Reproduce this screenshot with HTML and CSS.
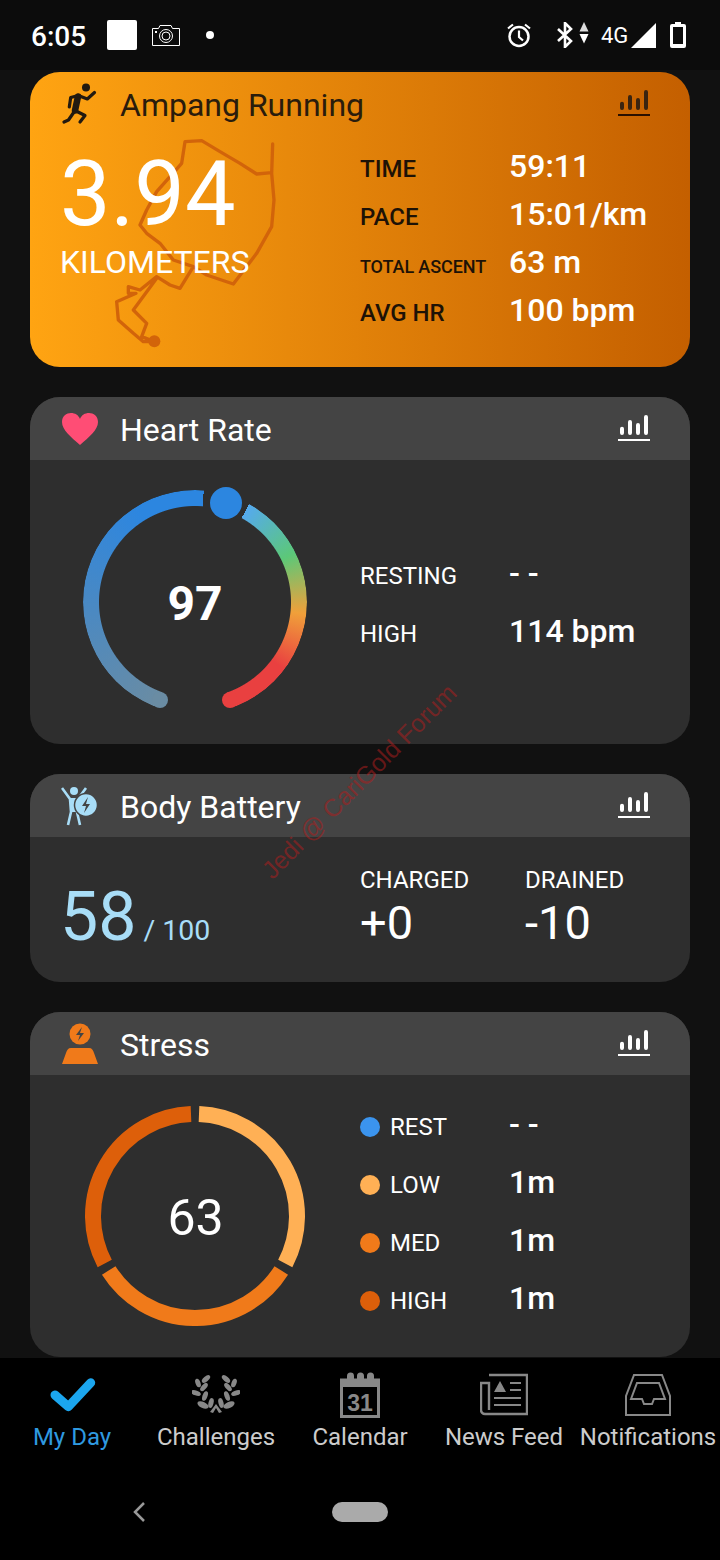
FILE: index.html
```html
<!DOCTYPE html>
<html lang="en">
<head>
<meta charset="utf-8">
<title>My Day</title>
<link rel="stylesheet" href="styles.css">
</head>
<body>
<div class="app">
  <header class="status">
    <span class="time">6:05</span>
    <span class="white-square"></span>
    <svg class="cam" width="28" height="21" viewBox="0 0 28 21"><path d="M.5 3.500h6l1.500-3h11l1.500 3h7v17H.5z" fill="none" stroke="#fff"/><circle cx="14" cy="11" r="6.500" fill="none" stroke="#fff"/><circle cx="14" cy="11" r="4" fill="none" stroke="#fff"/><rect x="3" y="6" width="2" height="2" fill="#fff"/></svg>
    <span class="dot"></span>
    <span class="status-right">
      <svg class="alarm" width="26" height="26" viewBox="0 0 26 26"><circle cx="13" cy="14.500" r="9.500" fill="none" stroke="#fff" stroke-width="2.500"/><path d="M13 8.500v6.500l4 3.500M2 6.500l5-4M24 6.500l-5-4" fill="none" stroke="#fff" stroke-width="2.200"/></svg>
      <svg class="bt" width="18" height="26" viewBox="0 0 18 26"><path d="M2 7l13 12-6 6V1l6 6L2 19" fill="none" stroke="#fff" stroke-width="2.600"/></svg>
      <svg class="updown" width="10" height="22" viewBox="0 0 10 22"><path d="M5 0l4.500 9.500h-9z" fill="#ddd"/><path d="M5 21.500L.5 12h9z" fill="#fff"/></svg>
      <span class="net">4G</span>
      <svg class="signal" width="25" height="25" viewBox="0 0 25 25"><path d="M25 0v25H0z" fill="#fff"/></svg>
      <svg class="battery" width="16" height="26" viewBox="0 0 16 26"><path d="M5 0h6v2h3a2 2 0 0 1 2 2v20a2 2 0 0 1-2 2H2a2 2 0 0 1-2-2V4a2 2 0 0 1 2-2h3z" fill="#fff"/><rect x="3" y="5" width="10" height="17" fill="#0c0c0c"/></svg>
    </span>
  </header>

  <main class="feed">
    <section class="card activity">
      <svg class="route" width="200" height="220" viewBox="300 402 600 660">
        <path d="M818 432L815 520L822 600L815 680L770 760L700 852L620 825L580 800L540 865L510 855L470 830L420 870L385 860L385 880L408 880L350 905L355 960L400 1000L430 1025L463 1025M815 518L770 522L720 490L660 455L605 422L555 425L545 490L510 530L470 575L440 630L420 675L440 700L480 730L520 780L580 800M470 835L400 930L440 970L425 1010L463 1025" fill="none" stroke="#d2640a" stroke-width="10" stroke-linejoin="round" stroke-linecap="round"/>
        <circle cx="463" cy="1024" r="18" fill="#d2640a"/>
      </svg>
      <div class="card-head">
        <svg class="head-icon" width="38" height="42" viewBox="0 0 38 42">
          <circle cx="25" cy="4.500" r="4" fill="#221a10"/>
          <path d="M17 13.500L14 27.500" fill="none" stroke="#221a10" stroke-width="6.500" stroke-linecap="round"/>
          <path d="M8.300 24L9.700 14.500 17.300 12.500 26.300 16 33.500 9.500M14 27.500L24 32.500 19 39M13 29L7.500 37 3 39" fill="none" stroke="#221a10" stroke-width="3.200" stroke-linejoin="round" stroke-linecap="round"/>
        </svg>
        <h2 class="card-title dark">Ampang Running</h2>
        <svg class="chart-icon chart-dark" width="32" height="28" viewBox="0 0 32 28"><path class="bars" d="M4 20v-4.300M12 20V9M20 20v-8M28 20V4"/><path class="base" d="M0 27h32"/></svg>
      </div>
      <div class="activity-body">
        <div class="distance">
          <div class="distance-num">3.94</div>
          <div class="distance-unit">KILOMETERS</div>
        </div>
        <dl class="stats">
          <div class="stat-row"><dt class="stat-label strong">TIME</dt><dd class="stat-value">59:11</dd></div>
          <div class="stat-row"><dt class="stat-label strong">PACE</dt><dd class="stat-value">15:01/km</dd></div>
          <div class="stat-row"><dt class="stat-label strong small">TOTAL ASCENT</dt><dd class="stat-value">63 m</dd></div>
          <div class="stat-row"><dt class="stat-label strong">AVG HR</dt><dd class="stat-value">100 bpm</dd></div>
        </dl>
      </div>
    </section>

    <section class="card heart">
      <div class="card-head">
        <svg class="head-icon" width="38" height="34" viewBox="0 0 38 34"><path d="M19 33C10 25 1 18 1 10 1 4 5.500 1 10 1c4 0 7.500 2 9 6 1.500-4 5-6 9-6 4.500 0 9 3 9 9 0 8-9 15-18 23z" fill="#ff4d75"/></svg>
        <h2 class="card-title">Heart Rate</h2>
        <svg class="chart-icon" width="32" height="28" viewBox="0 0 32 28"><path class="bars" d="M4 20v-4.300M12 20V9M20 20v-8M28 20V4"/><path class="base" d="M0 27h32"/></svg>
      </div>
      <div class="card-body heart-body">
        <div class="gauge">
          <div class="gauge-ring"></div>
          <span class="cap cap-left"></span>
          <span class="cap cap-right"></span>
          <span class="marker"></span>
          <span class="gauge-num">97</span>
        </div>
        <dl class="stats wide">
          <div class="stat-row"><dt class="stat-label">RESTING</dt><dd class="stat-value">- -</dd></div>
          <div class="stat-row"><dt class="stat-label">HIGH</dt><dd class="stat-value">114 bpm</dd></div>
        </dl>
      </div>
    </section>

    <section class="card battery-card">
      <div class="card-head">
        <svg class="head-icon" width="38" height="42" viewBox="0 0 38 42">
          <circle cx="13" cy="6" r="4" fill="#a8ddf7"/>
          <path d="M1 3l8 11 1 13-3 13M25 3l-8 11M16 27l3 13" fill="none" stroke="#a8ddf7" stroke-width="2.600"/>
          <path d="M9 13h8v14H9z" fill="#a8ddf7"/>
          <circle cx="25" cy="20" r="11.500" fill="#a8ddf7" stroke="#444" stroke-width="1.500"/>
          <path d="M27 12l-6 9h4l-2 7 6-9h-4z" fill="#444"/>
        </svg>
        <h2 class="card-title">Body Battery</h2>
        <svg class="chart-icon" width="32" height="28" viewBox="0 0 32 28"><path class="bars" d="M4 20v-4.300M12 20V9M20 20v-8M28 20V4"/><path class="base" d="M0 27h32"/></svg>
      </div>
      <div class="card-body battery-body">
        <div class="level"><span class="level-num">58</span><span class="level-max">/ 100</span></div>
        <div class="delta charged"><div class="stat-label">CHARGED</div><div class="delta-num">+0</div></div>
        <div class="delta"><div class="stat-label">DRAINED</div><div class="delta-num">-10</div></div>
      </div>
    </section>

    <section class="card stress">
      <div class="card-head">
        <svg class="head-icon" width="38" height="42" viewBox="0 0 38 42">
          <circle cx="19" cy="11" r="10.500" fill="#f07a1a"/>
          <path d="M21 4l-6 8h4l-2 6 6-8h-4z" fill="#444"/>
          <path d="M10 25h18c3 0 4 2 5 5l4 11H1l4-11c1-3 2-5 5-5z" fill="#f07a1a"/>
        </svg>
        <h2 class="card-title">Stress</h2>
        <svg class="chart-icon" width="32" height="28" viewBox="0 0 32 28"><path class="bars" d="M4 20v-4.300M12 20V9M20 20v-8M28 20V4"/><path class="base" d="M0 27h32"/></svg>
      </div>
      <div class="card-body stress-body">
        <div class="donut">
          <svg width="220" height="220" viewBox="0 0 220 220">
            <path d="M114 8.080A102 102 0 0 1 200.270 157.490" fill="none" stroke="#ffb055" stroke-width="16"/>
            <path d="M196.270 164.430A102 102 0 0 1 23.730 164.430" fill="none" stroke="#f07a1a" stroke-width="16"/>
            <path d="M19.730 157.490A102 102 0 0 1 106 8.080" fill="none" stroke="#dd5f0a" stroke-width="16"/>
          </svg>
          <span class="donut-num">63</span>
        </div>
        <dl class="legend">
          <div class="legend-row"><dt class="legend-label"><i class="swatch rest"></i>REST</dt><dd class="stat-value">- -</dd></div>
          <div class="legend-row"><dt class="legend-label"><i class="swatch low"></i>LOW</dt><dd class="stat-value">1m</dd></div>
          <div class="legend-row"><dt class="legend-label"><i class="swatch med"></i>MED</dt><dd class="stat-value">1m</dd></div>
          <div class="legend-row"><dt class="legend-label"><i class="swatch high"></i>HIGH</dt><dd class="stat-value">1m</dd></div>
        </dl>
      </div>
    </section>
  </main>

  <nav class="bottom">
    <div class="tabs">
      <div class="tab active">
        <svg class="tab-icon" width="48" height="46" viewBox="0 0 48 46"><path d="M7 23l13.300 11.700L42.700 10.700" fill="none" stroke="#1ba6ef" stroke-width="9" stroke-linecap="round" stroke-linejoin="round"/></svg>
        <span class="tab-label">My Day</span>
      </div>
      <div class="tab">
        <svg class="tab-icon" width="48" height="46" viewBox="0 0 48 46">
          <defs><g id="laurel" fill="#888">
            <ellipse cx="14" cy="7" rx="5" ry="2.500" transform="rotate(-40 14 7)"/>
            <ellipse cx="6" cy="11" rx="2.500" ry="4.500" transform="rotate(-20 6 11)"/>
            <ellipse cx="12" cy="15" rx="5" ry="2.500" transform="rotate(-50 12 15)"/>
            <ellipse cx="4" cy="21" rx="5" ry="2.500" transform="rotate(20 4 21)"/>
            <ellipse cx="13" cy="24" rx="5" ry="2.500" transform="rotate(-70 13 24)"/>
            <ellipse cx="11" cy="33" rx="6" ry="3" transform="rotate(25 11 33)"/>
            <ellipse cx="19" cy="31" rx="5" ry="2.500" transform="rotate(-75 19 31)"/>
            <path d="M24 36l-3 5-3-1 6-8z"/>
          </g></defs>
          <use href="#laurel"/>
          <use href="#laurel" transform="matrix(-1 0 0 1 48 0)"/>
        </svg>
        <span class="tab-label">Challenges</span>
      </div>
      <div class="tab">
        <svg class="tab-icon" width="42" height="46" viewBox="0 0 42 46">
          <path d="M2.500 8h37v36.500h-37z" fill="none" stroke="#888" stroke-width="3"/>
          <path d="M2 7h38v8H2z" fill="#888"/>
          <path d="M9 10V4a2.500 2.500 0 0 1 5 0v6M19 10V4a2.500 2.500 0 0 1 5 0v6M29 10V4a2.500 2.500 0 0 1 5 0v6" fill="#888" stroke="#888" stroke-width="2"/>
          <text x="21" y="39" class="cal-day">31</text>
        </svg>
        <span class="tab-label">Calendar</span>
      </div>
      <div class="tab">
        <svg class="tab-icon" width="48" height="46" viewBox="0 0 48 46">
          <path d="M9 3h38v39H5a4 4 0 0 1-4-4V11h8v27" fill="none" stroke="#888" stroke-width="2.400"/>
          <path d="M20 9l6 11H14z" fill="#888"/>
          <path d="M30 11h11M30 18h11M14 26h27M14 33h27" stroke="#888" stroke-width="2.200"/>
        </svg>
        <span class="tab-label">News Feed</span>
      </div>
      <div class="tab">
        <svg class="tab-icon" width="46" height="46" viewBox="0 0 46 46">
          <path d="M1 43V24L9 3h28l8 21v19z" fill="none" stroke="#888" stroke-width="2"/>
          <path d="M6 27l6-16h22l6 16H29l-2 5H19l-2-5z" fill="none" stroke="#888" stroke-width="2"/>
        </svg>
        <span class="tab-label">Notifications</span>
      </div>
    </div>
    <div class="gesture">
      <svg class="back" width="14" height="22" viewBox="0 0 14 22"><path d="M12 2L3 11l9 9" fill="none" stroke="#999" stroke-width="2.500"/></svg>
      <span class="pill"></span>
    </div>
  </nav>

  <div class="watermark">Jedi @ CariGold Forum</div>
</div>
</body>
</html>
```

FILE: styles.css
```css
* { box-sizing: border-box; }
html, body { margin: 0; padding: 0; }
body { background: #111; font-family: Roboto, "Noto Sans", sans-serif; color: #fff; }
h2, dl, dd, dt { margin: 0; padding: 0; font-weight: 400; }

.app { position: relative; width: 720px; height: 1560px; display: flex; flex-direction: column; overflow: hidden; background: #111; }

/* status bar */
.status { height: 70px; flex: none; background: #0c0c0c; display: flex; align-items: center; padding: 0 34px 0 31px; }
.time { font-size: 28px; font-weight: 500; width: 76px; padding-top: 3px; }
.white-square { width: 30px; height: 30px; background: #fff; border-radius: 2px; }
.cam { margin-left: 15px; }
.dot { width: 8px; height: 8px; border-radius: 50%; background: #fff; margin-left: 26px; }
.status-right { margin-left: auto; display: flex; align-items: center; }
.bt { margin-left: 24px; }
.updown { margin-left: 5px; margin-top: -4px; }
.net { font-size: 22px; margin-left: 12px; width: 29px; }
.signal { margin-left: 1px; }
.battery { margin-left: 14px; }

/* feed */
.feed { flex: 1; min-height: 0; overflow: hidden; padding: 2px 30px 0; display: flex; flex-direction: column; gap: 30px; }
.card { position: relative; flex: none; border-radius: 30px; overflow: hidden; background: #2e2e2e; }
.card-head { height: 63px; background: #444; display: flex; align-items: center; padding: 0 40px 0 31px; position: relative; }
.head-icon { flex: none; display: block; }
.card-title { flex: 1; font-size: 32px; margin-left: 21px; padding-top: 2px; white-space: nowrap; }
.card-title.dark { color: #2a1c0c; }
.chart-icon { flex: none; margin-top: -3px; }
.bars { fill: none; stroke: #fff; stroke-width: 4; stroke-linecap: round; }
.base { fill: none; stroke: #fff; stroke-width: 2; }
.chart-dark .bars { stroke: #3a2410; }
.chart-dark .base { stroke: #2a1000; }

/* activity */
.activity { height: 295px; background: linear-gradient(90deg, #ffa412, #c45f00); }
.activity .card-head { background: none; }
.route { position: absolute; left: 70px; top: 62px; }
.activity-body { position: relative; display: flex; }
.distance { width: 331px; padding-left: 30px; }
.distance-num { font-size: 90px; line-height: 92px; margin-top: 14px; }
.distance-unit { font-size: 32px; line-height: 36px; margin-top: 3px; }
.stats { display: flex; flex-direction: column; margin-left: -1px; }
.stat-row { display: flex; align-items: baseline; height: 48px; }
.stat-label { font-size: 24px; line-height: 30px; }
.stat-row .stat-label { width: 149px; white-space: nowrap; }
.stat-label.strong { font-weight: 500; color: #1d1206; }
.stat-label.small { font-size: 18px; letter-spacing: -.1px; }
.stat-value { font-size: 32px; line-height: 38px; font-weight: 500; white-space: nowrap; }
.activity .stats { padding-top: 12px; }

/* heart */
.card-body { display: flex; }
.heart-body { height: 284px; padding: 30px 0 0 53px; }
.gauge { position: relative; width: 224px; height: 224px; flex: none; display: flex; align-items: center; justify-content: center; }
.gauge-ring { position: absolute; inset: 0; border-radius: 50%;
  background: conic-gradient(#2c86e0 0deg 4.500deg, transparent 4.500deg 29deg, #55aaee 29deg, #5cc878 64deg, #f0a03a 96deg, #e94040 127deg, #e94040 160.400deg, transparent 160.400deg 200deg, #6a8ca3 200deg, #2c86e0 330deg);
  -webkit-mask: radial-gradient(closest-side, transparent 95.500px, #000 96.500px);
  mask: radial-gradient(closest-side, transparent 95.500px, #000 96.500px); }
.cap { position: absolute; width: 16px; height: 16px; border-radius: 50%; top: 202px; }
.cap-left { left: 69px; background: #6a8ca3; }
.cap-right { left: 139px; background: #e94040; }
.marker { position: absolute; width: 32px; height: 32px; border-radius: 50%; background: #2c86e0; left: 127px; top: -3px; }
.gauge-num { position: relative; font-size: 48px; font-weight: 700; padding-top: 3px; }
.stats.wide { margin-left: 53px; padding-top: 64px; gap: 10px; }

/* body battery */
.battery-body { height: 145px; position: relative; }
.level { width: 331px; padding: 42px 0 0 30px; display: flex; align-items: baseline; }
.level-num { font-size: 68px; line-height: 76px; color: #a8ddf7; }
.level-max { font-size: 28.500px; color: #a8ddf7; margin-left: 7px; }
.delta { padding-top: 28px; margin-left: -1px; }
.delta.charged { width: 165px; margin-right: 1px; }
.delta-num { font-size: 47px; line-height: 54px; margin-top: 1px; }

/* stress */
.stress-body { height: 282px; }
.donut { position: relative; width: 330px; flex: none; padding: 31px 0 0 55px; }
.donut svg { display: block; }
.donut-num { position: absolute; left: 55px; top: 33px; width: 220px; height: 220px; display: flex; align-items: center; justify-content: center; font-size: 50px; padding-left: 1px; }
.legend { padding-top: 22px; }
.legend-row { display: flex; align-items: center; height: 58px; }
.legend-label { width: 149px; font-size: 24px; padding-top: 1px; display: flex; align-items: center; }
.swatch { width: 20px; height: 20px; border-radius: 50%; margin-right: 10px; }
.legend .stat-value { margin-top: -5px; }
.rest { background: #3b94ee; }
.low { background: #ffb055; }
.med { background: #f07a1a; }
.high { background: #dd5f0a; }

/* bottom nav */
.bottom { flex: none; height: 202px; background: #000; display: flex; flex-direction: column; }
.tabs { display: flex; padding-top: 14px; }
.tab { flex: 1; min-width: 0; display: flex; flex-direction: column; align-items: center; }
.tab-icon { display: block; }
.tab-label { font-size: 24px; line-height: 28px; margin-top: 5px; color: #ccc; white-space: nowrap; }
.active .tab-label { color: #2f9ae0; }
.cal-day { font-family: "Liberation Sans", sans-serif; font-size: 23px; font-weight: 700; fill: #888; text-anchor: middle; }
.gesture { position: relative; height: 80px; display: flex; align-items: center; justify-content: center; margin-top: 21px; }
.pill { width: 56px; height: 20px; border-radius: 10px; background: #aaa; }
.back { position: absolute; left: 132px; top: 29px; }

.watermark { position: absolute; left: 224px; top: 767px; width: 270px; text-align: center; font-family: "Liberation Sans", sans-serif; font-size: 25px; line-height: 28px; color: rgba(175, 30, 30, .55); transform: rotate(-45deg); white-space: nowrap; }
```
